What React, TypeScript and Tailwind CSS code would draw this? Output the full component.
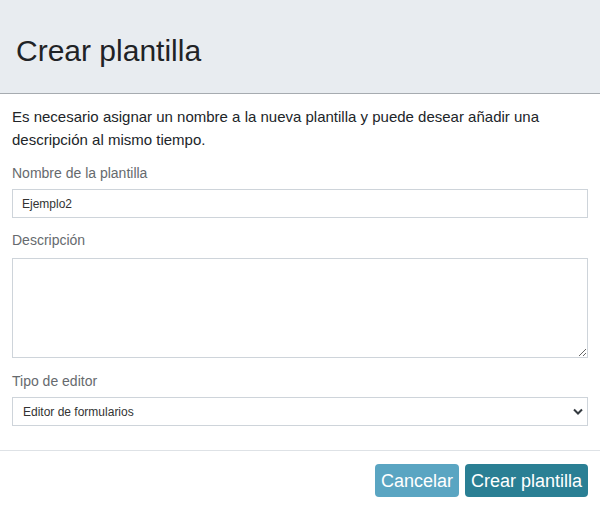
import { useState } from "react";

export default function App() {
  const [name, setName] = useState("Ejemplo2");
  const [desc, setDesc] = useState("");
  const [editor, setEditor] = useState("forms");

  return (
    <div className="w-[600px] h-[507px] bg-white font-['Liberation_Sans',Arial,sans-serif] text-[#212529] flex flex-col overflow-hidden">
      {/* Header */}
      <div className="h-[94px] bg-[#e8ecf0] border-b border-[#a6abb0] flex items-center px-4 shrink-0">
        <h1 className="text-[30px] leading-none text-[#1f2326] pt-[8px]">Crear plantilla</h1>
      </div>

      {/* Body */}
      <div className="px-3 pt-[11px] pb-[24px] flex flex-col">
        <p className="text-[15px] leading-[23px] text-[#212529]">
          Es necesario asignar un nombre a la nueva plantilla y puede desear añadir una descripción al mismo tiempo.
        </p>

        <label className="mt-[12px] text-[14px] leading-[20px] text-[#666a6e]">Nombre de la plantilla</label>
        <input
          value={name}
          onChange={(e) => setName(e.target.value)}
          className="mt-[6px] h-[29px] w-full border border-[#ced4da] px-[9px] text-[12px] text-[#333] outline-none"
        />

        <label className="mt-[12px] text-[14px] leading-[20px] text-[#666a6e]">Descripción</label>
        <textarea
          value={desc}
          onChange={(e) => setDesc(e.target.value)}
          className="mt-[8px] h-[100px] w-full border border-[#ced4da] px-[9px] py-1 text-[12px] outline-none resize-y"
        />

        <label className="mt-[13px] text-[14px] leading-[20px] text-[#666a6e]">Tipo de editor</label>
        <div className="mt-[6px] relative">
          <select
            value={editor}
            onChange={(e) => setEditor(e.target.value)}
            className="appearance-none h-[29px] w-full border border-[#ced4da] pl-[10px] pr-8 text-[12px] text-[#333] bg-white outline-none"
          >
            <option value="forms">Editor de formularios</option>
            <option value="text">Editor de texto</option>
          </select>
          <svg
            className="absolute right-[5px] top-[11px] pointer-events-none"
            width="10"
            height="7"
            viewBox="0 0 10 7"
          >
            <path d="M1 1.5 L5 5.5 L9 1.5" fill="none" stroke="#343a40" strokeWidth="2" />
          </svg>
        </div>
      </div>

      {/* Footer */}
      <div className="border-t border-[#dee2e6] flex justify-end gap-[6px] px-3 pt-[13px]">
        <button className="h-[33px] px-[6px] rounded-[4px] bg-[#5aa5c2] text-white text-[18px] leading-none">
          Cancelar
        </button>
        <button className="h-[33px] px-[6px] rounded-[4px] bg-[#2a7f94] text-white text-[18px] leading-none">
          Crear plantilla
        </button>
      </div>
    </div>
  );
}
